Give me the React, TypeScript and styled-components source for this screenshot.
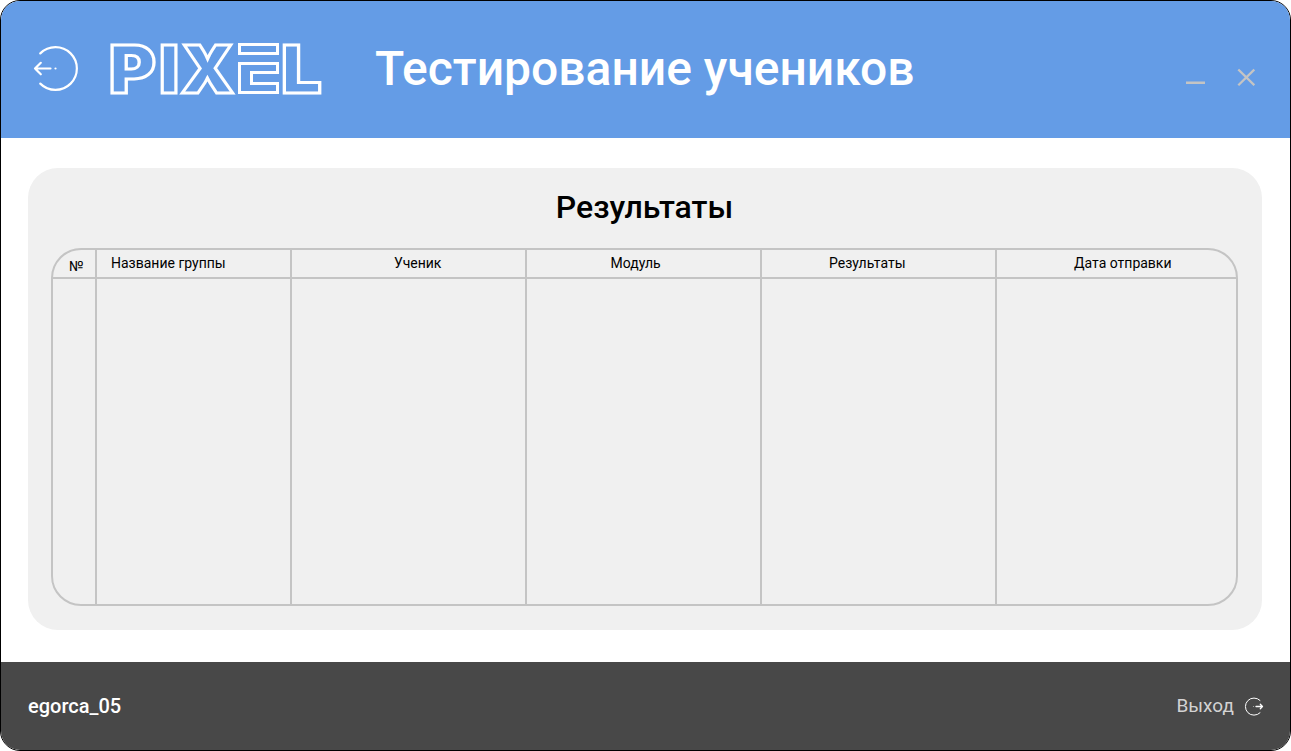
import React from "react";
import styled, { createGlobalStyle } from "styled-components";

const GlobalStyle = createGlobalStyle`
  *, *::before, *::after { box-sizing: border-box; }
  body { margin: 0; background: #fff; font-family: Roboto, "Noto Sans", sans-serif; }
  button { font: inherit; color: inherit; background: none; border: 0; padding: 0; cursor: pointer; display: flex; }
  svg { display: block; flex: none; }
`;

const Window = styled.div`
  width: 1291px;
  height: 751px;
  display: flex;
  flex-direction: column;
  border: 1px solid #000;
  border-radius: 20px;
  overflow: hidden;
  background: #fff;
`;

const Header = styled.header`
  flex: none;
  height: 137px;
  display: flex;
  align-items: flex-start;
  padding: 41px 35px 0 32px;
  background: #649ce6;
  color: #fff;
`;

const BackButton = styled.button`
  margin-top: 3px;
`;

const Logo = styled.svg`
  margin: -18px 0 0 29px;
  font-family: Inter, sans-serif;
  font-size: 66px;
  font-weight: 900;
  fill: none;
  stroke: #fff;
  stroke-width: 3px;
`;

const Title = styled.h1`
  margin: -1px 0 0 51px;
  font-size: 48px;
  line-height: 56px;
  font-weight: 500;
  white-space: nowrap;
`;

const WindowControls = styled.div`
  display: flex;
  gap: 32px;
  margin: 26px 0 0 auto;
  color: #c4c4c4;
`;

const Main = styled.main`
  flex: 1;
  display: flex;
  padding: 30px 28px 32px 27px;
`;

const Panel = styled.section`
  flex: 1;
  display: flex;
  flex-direction: column;
  padding: 20px 24px 24px 23px;
  border-radius: 30px;
  background: #f0f0f0;
`;

const PanelTitle = styled.h2`
  margin: 0 0 22px;
  font-size: 32px;
  line-height: 38px;
  font-weight: 500;
  text-align: center;
  color: #000;
`;

const Table = styled.div`
  flex: 1;
  display: grid;
  grid-template-columns: 44px 195px 235px 235px 235px 1fr;
  grid-template-rows: 29px 1fr;
  border: 2px solid #c4c4c4;
  border-radius: 30px;
  overflow: hidden;
`;

const HeadCell = styled.div<{ $indent: number; $drop?: number }>`
  padding: ${({ $drop = 0 }) => 5 + $drop}px 0 0 ${({ $indent }) => $indent}px;
  font-size: 14px;
  line-height: 16px;
  color: #000;
  white-space: nowrap;
  border-bottom: 2px solid #c4c4c4;
  &:not(:nth-child(6n)) { border-right: 2px solid #c4c4c4; }
`;

const BodyCell = styled.div`
  &:not(:nth-child(6n)) { border-right: 2px solid #c4c4c4; }
`;

const Footer = styled.footer`
  flex: none;
  height: 88px;
  display: flex;
  align-items: center;
  justify-content: space-between;
  padding: 0 26px 0 27px;
  background: #484848;
  font-size: 20px;
  line-height: 24px;
`;

const UserName = styled.span`
  font-weight: 500;
  color: #fff;
`;

const ExitButton = styled.button`
  align-items: center;
  gap: 10px;
  font-size: 19px;
  color: #d3d3d3;
`;

const columns = [
  { title: "№", indent: 16, drop: 3 },
  { title: "Название группы", indent: 14 },
  { title: "Ученик", indent: 102 },
  { title: "Модуль", indent: 83.5 },
  { title: "Результаты", indent: 67 },
  { title: "Дата отправки", indent: 77 },
];

function PixelLogo() {
  return (
    <Logo width="216" height="90" viewBox="0 -18 216 90" role="img" aria-label="PIXEL">
      <text transform="translate(0.8 50.5) scale(1.087 1)">P</text>
      <text transform="translate(50.9 50.5) scale(1.05 1)">I</text>
      <text transform="translate(72.8 50.5) scale(1.03 1)">X</text>
      <rect x="131.5" y="2.5" width="38" height="9" />
      <g stroke="none" fill="#fff">
        <rect x="130" y="20" width="41" height="32" />
        <g fill="#649ce6">
          <rect x="133" y="23" width="9" height="26" />
          <rect x="133" y="23" width="35" height="6" />
          <rect x="133" y="43" width="35" height="6" />
          <rect x="145" y="32" width="26" height="8" />
        </g>
      </g>
      <text transform="translate(173 50.5) scale(1.09 1)">L</text>
    </Logo>
  );
}

export default function App() {
  return (
    <>
      <GlobalStyle />
      <Window>
        <Header>
          <BackButton aria-label="Назад">
            <svg width="46" height="46" viewBox="0 0 46 46" fill="none" stroke="#fff" strokeWidth="2.2" strokeLinecap="round" strokeLinejoin="round">
              <path d="M7.3 8.4a21.4 21.4 0 1 1 0 30.2" />
              <path d="M17.5 23.5H2M7.8 17.8L2 23.5l5.8 5.8" />
              <circle cx="22.5" cy="23.5" r="1.1" fill="#fff" stroke="none" />
            </svg>
          </BackButton>
          <PixelLogo />
          <Title>Тестирование учеников</Title>
          <WindowControls>
            <button aria-label="Свернуть">
              <svg width="19" height="19" viewBox="0 0 19 19" fill="none" stroke="currentColor" strokeWidth="2.5">
                <path d="M0 14.8H19" />
              </svg>
            </button>
            <button aria-label="Закрыть">
              <svg width="18" height="18" viewBox="0 0 18 18" fill="none" stroke="currentColor" strokeWidth="2.3">
                <path d="M1.3 1.5L17.3 17.2M17.3 1.5L1.3 17.2" />
              </svg>
            </button>
          </WindowControls>
        </Header>
        <Main>
          <Panel>
            <PanelTitle>Результаты</PanelTitle>
            <Table>
              {columns.map((c) => (
                <HeadCell key={c.title} $indent={c.indent} $drop={c.drop}>
                  {c.title}
                </HeadCell>
              ))}
              {columns.map((c) => (
                <BodyCell key={c.title} />
              ))}
            </Table>
          </Panel>
        </Main>
        <Footer>
          <UserName>egorca_05</UserName>
          <ExitButton>
            Выход
            <svg width="20" height="20" viewBox="0 0 20 20" fill="none" stroke="#fff" strokeLinecap="round" strokeLinejoin="round">
              <path d="M16 4.4a8.6 8.6 0 1 0 0 12.4" />
              <path d="M12 10.5h6.5M16.3 8.3l2.2 2.2-2.2 2.2" strokeWidth="1.3" />
              <circle cx="9.5" cy="10.5" r="0.6" fill="#fff" stroke="none" opacity="0.6" />
            </svg>
          </ExitButton>
        </Footer>
      </Window>
    </>
  );
}
